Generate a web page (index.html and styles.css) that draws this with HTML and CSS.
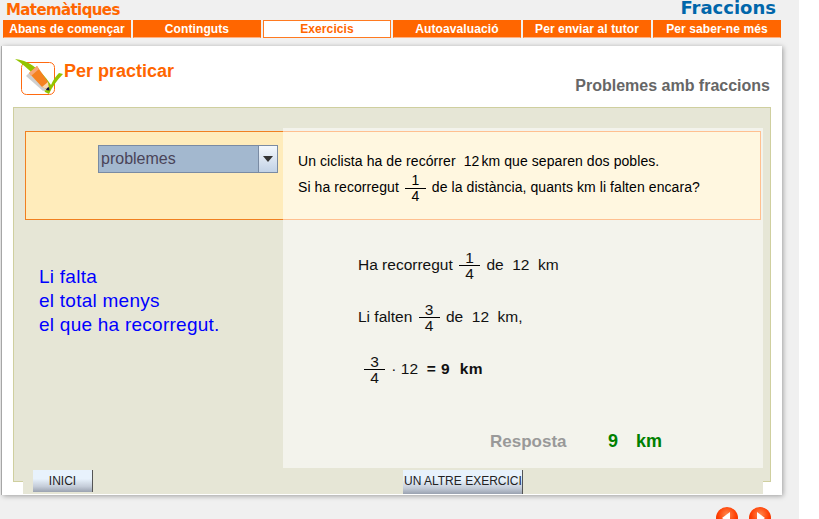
FILE: index.html
```html
<!DOCTYPE html>
<html lang="ca">
<head>
<meta charset="utf-8">
<title>Fraccions</title>
<link rel="stylesheet" href="styles.css">
</head>
<body>
<div class="page">
  <header class="top">
    <span class="subject">Matemàtiques</span>
    <span class="unit">Fraccions</span>
  </header>
  <nav class="nav">
    <a class="nav-item">Abans de començar</a>
    <a class="nav-item">Continguts</a>
    <a class="nav-item active">Exercicis</a>
    <a class="nav-item">Autoavaluació</a>
    <a class="nav-item">Per enviar al tutor</a>
    <a class="nav-item">Per saber-ne més</a>
  </nav>
  <main class="card">
    <div class="card-head">
      <div class="brand">
        <svg class="logo" width="50" height="38" viewBox="0 0 50 38">
          <rect x="6.5" y="3.5" width="33" height="32" rx="5" fill="#fff" stroke="#ff6a10"/>
          <path d="M0 0 C12 1 24 8 36 26 C38 21 41 17 44 14 L48 15 C42 21 37 28 34 35 L30 33 C26 22 14 9 0 0 Z" fill="#93c400"/>
          <path d="M11 17 L14 14 L32 31 L28 32 Z" fill="#cfcfcf"/>
          <path d="M14 14 L22 7 L33 23 L34 31 L27 28 Z" fill="#f58220"/>
          <path d="M14 14 L22 7 L24 10 L16 17 Z" fill="#f7a878"/>
          <path d="M27 28 L33 23 L34 31 Z" fill="#f8d8b0"/>
          <path d="M32 29 L34 28 L34.5 31.5 L31 31 Z" fill="#101040"/>
        </svg>
        <h1 class="section">Per practicar</h1>
      </div>
      <h2 class="topic">Problemes amb fraccions</h2>
    </div>
    <section class="frame">
      <div class="applet">
        <div class="workspace">
          <div class="left">
            <div class="band band-left">
              <div class="select">
                <span class="select-value">problemes</span>
                <span class="select-arrow"></span>
              </div>
            </div>
            <p class="hint">Li falta<br>el total menys<br>el que ha recorregut.</p>
          </div>
          <div class="right">
            <div class="band band-right">
              <p class="statement">Un ciclista ha de recórrer&nbsp; 12<span class="thin"></span>km que separen dos pobles.</p>
              <p class="statement">Si ha recorregut <span class="frac"><span class="num">1</span><span class="den">4</span></span> de la distància, quants km li falten encara?</p>
            </div>
            <div class="steps">
              <p class="step">Ha recorregut <span class="frac"><span class="num">1</span><span class="den">4</span></span> de&nbsp; 12&nbsp; km</p>
              <p class="step">Li falten <span class="frac"><span class="num">3</span><span class="den">4</span></span> de&nbsp; 12&nbsp; km,</p>
              <p class="step step-last"><span class="frac"><span class="num">3</span><span class="den">4</span></span> · 12&nbsp; <b class="result">= 9&nbsp; km</b></p>
            </div>
            <div class="answer">
              <span class="answer-label">Resposta</span>
              <span class="answer-num">9</span>
              <span class="answer-unit">km</span>
            </div>
          </div>
        </div>
        <div class="actions">
          <button class="btn btn-home">INICI</button>
          <button class="btn btn-next">UN ALTRE EXERCICI</button>
        </div>
      </div>
    </section>
  </main>
  <div class="pager">
    <svg class="pager-btn" width="22" height="22" viewBox="0 0 22 22"><defs><radialGradient id="r1" cx=".5" cy=".35" r=".7"><stop offset="0" stop-color="#ff8a50"/><stop offset=".6" stop-color="#ff3c00"/><stop offset="1" stop-color="#d93000"/></radialGradient></defs><circle cx="11" cy="11" r="11" fill="url(#r1)"/><path d="M14 5 L14 17 L6 11 Z" fill="#fff"/></svg>
    <svg class="pager-btn" width="22" height="22" viewBox="0 0 22 22"><circle cx="11" cy="11" r="11" fill="url(#r1)"/><path d="M8 5 L8 17 L16 11 Z" fill="#fff"/></svg>
  </div>
</div>
</body>
</html>
```
FILE: styles.css
```css
* { box-sizing: border-box; }
html, body { margin: 0; height: 100%; overflow: hidden; background: #fff; }
body { font-family: "Liberation Sans", Arial, sans-serif; }
p, h1, h2 { margin: 0; }

.page { width: 799px; height: 519px; background: #f0f0f0; padding: 0 0 0 2px; overflow: hidden; }

.top { display: flex; justify-content: space-between; align-items: flex-start; height: 20px; padding: 0 4px 0 4px; width: 778px; }
.subject { font: bold 15px/21px "DejaVu Sans", sans-serif; color: #ff6600; letter-spacing: -.6px; }
.unit { font: bold 18px/16px "DejaVu Sans", sans-serif; color: #0066aa; }

.nav { display: flex; gap: 2px; width: 779px; height: 18px; margin-left: 1px; }
.nav-item { width: 128px; height: 18px; background: #ff6600; color: #fff; font: bold 12px/16px "Liberation Sans", sans-serif; letter-spacing: .1px; text-align: center; border: 1px solid #ff6600; border-bottom-color: #ffb080; }
.nav-item.active { background: #fff; color: #ff6600; border-color: #ff7a20; }

.card { width: 780px; height: 449px; margin-top: 8px; background: #fff; box-shadow: 1px 1px 5px rgba(0,0,0,.35), -1px 0 0 #b8b8b8; padding: 0 11px; }
.card-head { display: flex; justify-content: space-between; height: 61px; }
.brand { display: flex; align-items: flex-start; padding-top: 13px; margin-left: 2px; }
.logo { display: block; }
.section { font: bold 18px/20px "Liberation Sans", sans-serif; color: #ff6600; margin-left: -1px; padding-top: 2px; }
.topic { font: bold 16px/18px "Liberation Sans", sans-serif; color: #666; padding-top: 31px; margin-right: 1px; }

.frame { width: 758px; height: 375px; background: #e6e6d6; border: 1px solid #cfcf9f; padding: 0 0 0 9px; }
.applet { width: 740px; height: 386px; background: #e6e6d6; display: flex; flex-direction: column; }
.workspace { display: flex; height: 360px; }
.left { width: 260px; padding: 23px 0 0 2px; }
.right { width: 480px; background: #f3f3ec; margin-top: 20px; padding: 3px 2px 0 0; display: flex; flex-direction: column; }

.band { height: 89px; }
.band-left { background: #ffecbb; border: 1px solid #f08020; border-right: 0; padding: 13px 0 0 72px; }
.band-right { background: #fff7e0; border: 1px solid #ffc090; border-left: 0; padding: 17px 0 0 15px; }

.select { display: flex; width: 180px; height: 28px; background: #a3b8cf; border: 1px solid #7a8ba3; }
.select-value { flex: 1; font: 16px/26px "Liberation Sans", sans-serif; color: #4a4458; padding-left: 2px; }
.select-arrow { width: 19px; border-left: 1px solid #7a8ba3; background: linear-gradient(#f4f8fc, #c2d2e6); position: relative; }
.select-arrow::after { content: ""; position: absolute; left: 4px; top: 10px; border: 5px solid transparent; border-top: 6px solid #333; border-bottom: 0; }

.hint { font: 19px/24px "Liberation Sans", sans-serif; color: #0000ff; margin: 45px 0 0 14px; letter-spacing: .25px; }

.statement { font: 14px/24px "Liberation Sans", sans-serif; color: #000; letter-spacing: .08px; height: 24px; }
.thin { display: inline-block; width: 2px; }
.frac { display: inline-flex; flex-direction: column; align-items: center; vertical-align: middle; min-width: 21px; margin: 0 2px; }
.num { border-bottom: 1px solid #000; width: 100%; text-align: center; line-height: 15px; }
.den { line-height: 15px; }

.steps { padding: 30px 0 0 75px; font: 15.5px/20px "Liberation Sans", sans-serif; color: #111; }
.step { height: 52px; }
.step-last { padding-left: 4px; }
.result { letter-spacing: .5px; }

.answer { display: flex; align-items: baseline; padding: 25px 0 0 207px; }
.answer-label { font: bold 17px/20px "Liberation Sans", sans-serif; color: #999; width: 118px; }
.answer-num { font: bold 18px/20px "Liberation Sans", sans-serif; color: #008000; width: 28px; }
.answer-unit { font: bold 18px/20px "Liberation Sans", sans-serif; color: #008000; }

.actions { display: flex; align-items: flex-start; height: 26px; padding: 2px 0 0 10px; }
.btn { padding: 0; border: 0; border-right: 1px solid #555; background: linear-gradient(#e8f2fc 0 40%, #c4ccd8 75%, #9aa2b0); color: #222; font: 12px/20px "Liberation Sans", sans-serif; overflow: hidden; white-space: nowrap; }
.btn-home { width: 60px; height: 22px; }
.btn-next { width: 120px; height: 24px; margin-left: 310px; text-align: left; padding: 0 0 2px 1px; }

.pager { display: flex; gap: 11px; justify-content: flex-end; width: 769px; margin-top: 12px; }
.pager-btn { display: block; flex: none; }
```
